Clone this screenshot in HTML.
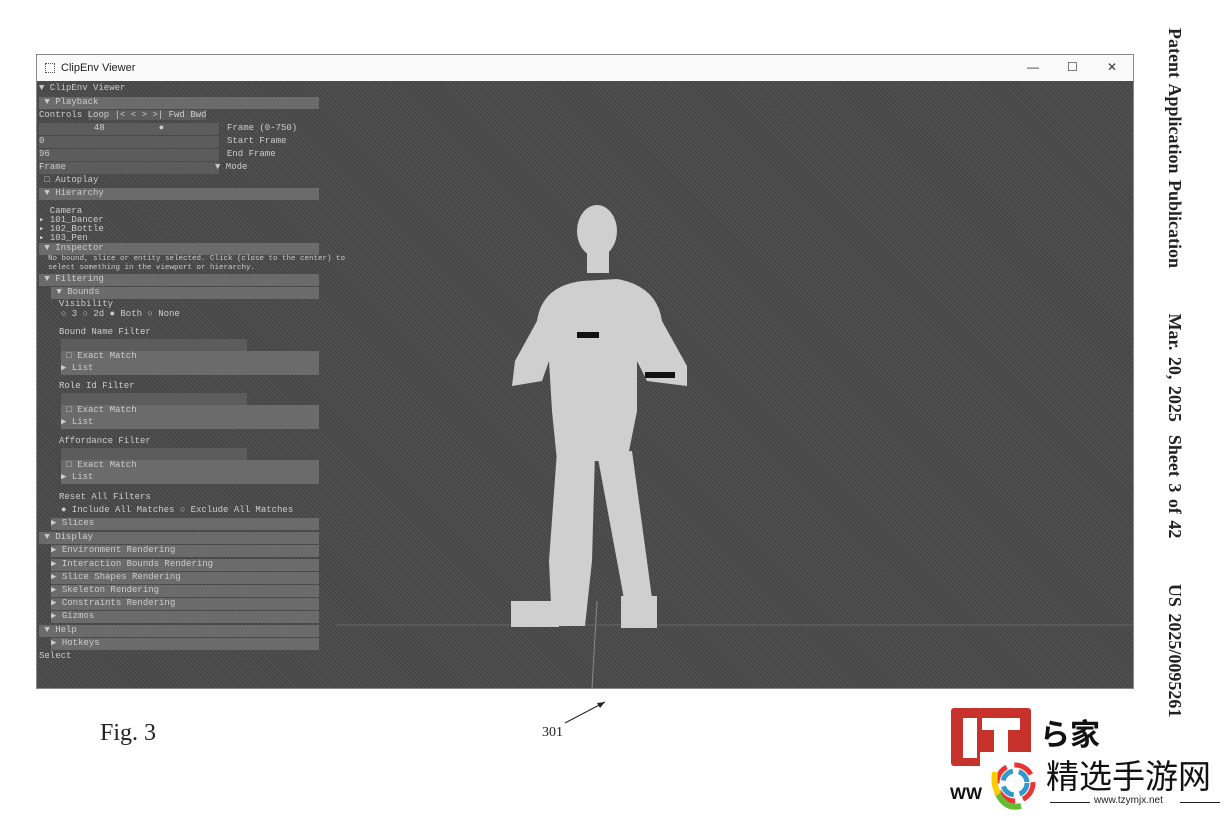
<!DOCTYPE html>
<html><head><meta charset="utf-8"><style>
*{margin:0;padding:0;box-sizing:border-box}
body{width:1229px;height:816px;background:#fff;position:relative;overflow:hidden;font-family:"Liberation Sans",sans-serif}
.win{position:absolute;left:36px;top:54px;width:1098px;height:635px;border:1px solid #888;background:#464646;
background-image:repeating-linear-gradient(45deg,rgba(255,255,255,.08) 0 1px,transparent 1px 3px)}
.tb{position:absolute;left:0;top:0;right:0;height:26px;background:#fafafa;font-size:11px;color:#222}
.tb .t{position:absolute;left:24px;top:7px}
.tb .i{position:absolute;left:8px;top:8px;width:10px;height:10px;border:1px dotted #555}
.ctl{position:absolute;top:5px;font-size:12px;color:#333}
.row{position:absolute;left:2px;height:12px;font:9px "Liberation Mono",monospace;color:#ccc;white-space:nowrap}
.hd{background:#6b6b6b;width:280px}
.fld{background:#5c5c5c}
.vt{position:absolute;left:1165px;top:28px;transform-origin:0 0;transform:translate(20px,0) rotate(90deg);font:bold 18px "Liberation Serif",serif;color:#222;white-space:nowrap;word-spacing:2px}
</style></head><body>
<div class="win">
<div class="tb"><div class="i"></div><div class="t">ClipEnv Viewer</div>
<span class="ctl" style="left:990px">—</span><span class="ctl" style="left:1030px">☐</span><span class="ctl" style="left:1070px">✕</span></div>
<div class="row" style="top:28px">▼ ClipEnv Viewer</div>
<div class="row hd" style="top:42px">&nbsp;▼ Playback</div>
<div class="row" style="top:55px">Controls <span class="fld">Loop |&lt; &lt; &gt; &gt;| Fwd Bwd</span></div>
<div class="row fld" style="top:68px;width:180px;text-align:center">48 &nbsp;&nbsp;&nbsp;&nbsp;&nbsp;&nbsp;&nbsp;&nbsp;&nbsp;● </div><div class="row" style="top:68px;left:190px">Frame (0-750)</div>
<div class="row fld" style="top:81px;width:180px">0</div><div class="row" style="top:81px;left:190px">Start Frame</div>
<div class="row fld" style="top:94px;width:180px">96</div><div class="row" style="top:94px;left:190px">End Frame</div>
<div class="row fld" style="top:107px;width:180px">Frame</div><div class="row" style="top:107px;left:178px">▼ Mode</div>
<div class="row" style="top:120px">&nbsp;□ Autoplay</div>
<div class="row hd" style="top:133px">&nbsp;▼ Hierarchy</div>
<div class="row" style="top:151px">&nbsp;&nbsp;Camera</div>
<div class="row" style="top:160px">▸ 101_Dancer</div>
<div class="row" style="top:169px">▸ 102_Bottle</div>
<div class="row" style="top:178px">▸ 103_Pen</div>
<div class="row hd" style="top:188px">&nbsp;▼ Inspector</div>
<div class="row" style="top:200px;font-size:7.5px">&nbsp;&nbsp;No bound, slice or entity selected. Click (close to the center) to</div>
<div class="row" style="top:209px;font-size:7.5px">&nbsp;&nbsp;select something in the viewport or hierarchy.</div>
<div class="row hd" style="top:219px">&nbsp;▼ Filtering</div>
<div class="row hd" style="top:232px;left:14px;width:268px">&nbsp;▼ Bounds</div>
<div class="row" style="top:244px;left:22px">Visibility</div>
<div class="row" style="top:254px;left:24px">○ 3 ○ 2d ● Both ○ None</div>
<div class="row" style="top:272px;left:22px">Bound Name Filter</div>
<div class="row fld" style="top:284px;left:24px;width:186px"></div>
<div class="row hd" style="top:296px;left:24px;width:258px">&nbsp;□ Exact Match</div>
<div class="row hd" style="top:308px;left:24px;width:258px">▶ List</div>
<div class="row" style="top:326px;left:22px">Role Id Filter</div>
<div class="row fld" style="top:338px;left:24px;width:186px"></div>
<div class="row hd" style="top:350px;left:24px;width:258px">&nbsp;□ Exact Match</div>
<div class="row hd" style="top:362px;left:24px;width:258px">▶ List</div>
<div class="row" style="top:381px;left:22px">Affordance Filter</div>
<div class="row fld" style="top:393px;left:24px;width:186px"></div>
<div class="row hd" style="top:405px;left:24px;width:258px">&nbsp;□ Exact Match</div>
<div class="row hd" style="top:417px;left:24px;width:258px">▶ List</div>
<div class="row" style="top:437px;left:22px">Reset All Filters</div>
<div class="row" style="top:450px;left:24px">● Include All Matches ○ Exclude All Matches</div>
<div class="row hd" style="top:463px;left:14px;width:268px">▶ Slices</div>
<div class="row hd" style="top:477px">&nbsp;▼ Display</div>
<div class="row hd" style="top:490px;left:14px;width:268px">▶ Environment Rendering</div>
<div class="row hd" style="top:504px;left:14px;width:268px">▶ Interaction Bounds Rendering</div>
<div class="row hd" style="top:517px;left:14px;width:268px">▶ Slice Shapes Rendering</div>
<div class="row hd" style="top:530px;left:14px;width:268px">▶ Skeleton Rendering</div>
<div class="row hd" style="top:543px;left:14px;width:268px">▶ Constraints Rendering</div>
<div class="row hd" style="top:556px;left:14px;width:268px">▶ Gizmos</div>
<div class="row hd" style="top:570px">&nbsp;▼ Help</div>
<div class="row hd" style="top:583px;left:14px;width:268px">▶ Hotkeys</div>
<div class="row" style="top:596px">Select</div>
<svg style="position:absolute;left:0;top:26px" width="1096" height="608">
<line x1="560" y1="520" x2="555" y2="608" stroke="#888" stroke-width="1"/>
<line x1="300" y1="544" x2="1096" y2="544" stroke="#666"/>
<g fill="#cfcfcf">
<ellipse cx="560" cy="150" rx="20" ry="26"/>
<rect x="550" y="170" width="22" height="22"/>
<path d="M500 240 Q505 205 545 200 L580 198 Q620 205 625 240 L650 285 L650 305 L610 300 L600 280 L600 330 L590 380 L520 380 L515 330 L512 280 L505 300 L475 305 L478 280 Z"/>
<path d="M520 370 L558 372 L555 480 L548 545 L515 545 L512 480 Z"/>
<path d="M560 372 L595 370 L610 480 L618 540 L592 545 L580 480 Z"/>
<rect x="474" y="520" width="48" height="26"/><rect x="584" y="515" width="36" height="32"/>
</g>
<rect x="540" y="251" width="22" height="6" fill="#111"/><rect x="608" y="291" width="30" height="6" fill="#111"/>
</svg>
</div>
<div class="vt">Patent Application Publication&nbsp;&nbsp;&nbsp;&nbsp;&nbsp;&nbsp;&nbsp;Mar. 20, 2025&nbsp; Sheet 3 of 42&nbsp;&nbsp;&nbsp;&nbsp;&nbsp;&nbsp;&nbsp;US 2025/0095261</div>
<div style="position:absolute;left:100px;top:720px;font:24px 'Liberation Serif',serif;color:#222">Fig. 3</div>
<div style="position:absolute;left:542px;top:725px;font:14px 'Liberation Serif',serif;color:#222">301</div>
<svg style="position:absolute;left:560px;top:698px" width="50" height="30"><line x1="5" y1="25" x2="45" y2="4" stroke="#222"/><path d="M45 4 L37 5 L40 10 Z" fill="#222"/></svg>
<div style="position:absolute;left:951px;top:708px;width:80px;height:58px;background:#c8322c;border-radius:3px"></div>
<div style="position:absolute;left:963px;top:718px;width:14px;height:40px;background:#fff"></div>
<div style="position:absolute;left:982px;top:718px;width:38px;height:12px;background:#fff"></div>
<div style="position:absolute;left:994px;top:718px;width:14px;height:40px;background:#fff"></div>
<div style="position:absolute;left:1040px;top:710px;font:bold 30px 'Noto Sans CJK SC',sans-serif;color:#111">ら家</div>
<div style="position:absolute;left:980px;top:752px;width:249px;height:64px;background:#fff"></div>
<div style="position:absolute;left:950px;top:784px;font:bold 17px 'Liberation Sans',sans-serif;color:#111">WW</div>
<svg style="position:absolute;left:985px;top:752px" width="60" height="62"><circle cx="30" cy="31" r="18" fill="none" stroke="#e33" stroke-width="5" stroke-dasharray="20 8"/><circle cx="30" cy="31" r="12" fill="none" stroke="#39c" stroke-width="5" stroke-dasharray="14 6"/><path d="M12 40 Q20 58 36 54" stroke="#6b3" stroke-width="6" fill="none"/><path d="M10 20 Q8 35 14 42" stroke="#fc0" stroke-width="6" fill="none"/></svg>
<div style="position:absolute;left:1046px;top:754px;font:33px 'Noto Sans CJK SC',sans-serif;color:#111;white-space:nowrap;line-height:40px">精选手游网</div>
<div style="position:absolute;left:1050px;top:802px;width:40px;border-top:1px solid #222"></div>
<div style="position:absolute;left:1094px;top:795px;font:10px 'Liberation Sans',sans-serif;color:#222">www.tzymjx.net</div>
<div style="position:absolute;left:1180px;top:802px;width:40px;border-top:1px solid #222"></div>
</body></html>
